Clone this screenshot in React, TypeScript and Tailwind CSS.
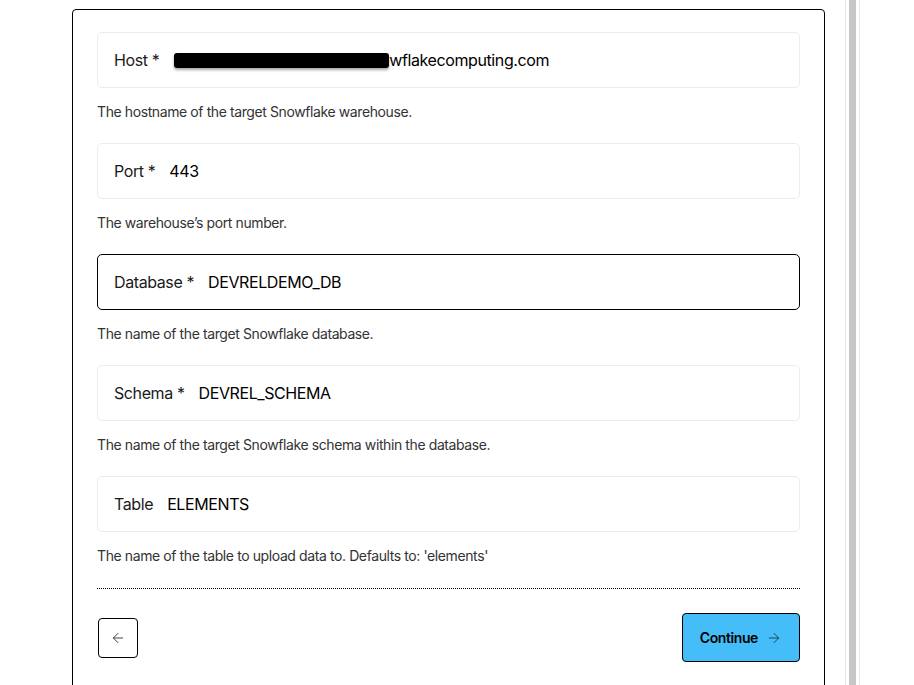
import React from 'react';
import { ArrowLeft, ArrowRight } from 'lucide-react';

type Field = {
  label: string;
  value: string;
  help: string;
  required?: boolean;
  focused?: boolean;
  redacted?: boolean;
};

const fields: Field[] = [
  { label: 'Host', value: 'wflakecomputing.com', help: 'The hostname of the target Snowflake warehouse.', required: true, redacted: true },
  { label: 'Port', value: '443', help: 'The warehouse\u2019s port number.', required: true },
  { label: 'Database', value: 'DEVRELDEMO_DB', help: 'The name of the target Snowflake database.', required: true, focused: true },
  { label: 'Schema', value: 'DEVREL_SCHEMA', help: 'The name of the target Snowflake schema within the database.', required: true },
  { label: 'Table', value: 'ELEMENTS', help: "The name of the table to upload data to. Defaults to: 'elements'" },
];

function FormField({ field }: { field: Field }) {
  return (
    <div className="flex flex-col">
      <div
        className={
          'flex items-center h-[56px] px-4 rounded-[5px] border ' +
          (field.focused ? 'border-black' : 'border-[#ececec]')
        }
      >
        <span className="text-[16px] text-[#1a1a1a] whitespace-nowrap">
          {field.label}
          {field.required && ' *'}
        </span>
        <span className="ml-[14px] flex items-center text-[16px] text-black whitespace-nowrap">
          {field.redacted && (
            <span className="inline-block ml-px w-[215px] h-[15px] bg-black rounded-[3px] shadow-[0_2px_3px_rgba(0,0,0,0.35)]" />
          )}
          {field.value}
        </span>
      </div>
      <p className="mt-[14px] text-[14px] leading-5 text-[#333]">{field.help}</p>
    </div>
  );
}

export default function App() {
  return (
    <div className="min-h-screen bg-white font-['Inter',sans-serif] tracking-tight flex items-start">
      <div className="ml-[72px] mt-[9px] w-[753px] shrink-0 border border-black rounded-t-[4px] px-6 pt-[22px] pb-6">
        <div className="flex flex-col gap-[21px]">
          {fields.map((f) => (
            <FormField key={f.label} field={f} />
          ))}
        </div>

        <div className="mt-[22px] border-t border-dotted border-black" />

        <div className="mt-6 flex items-center justify-between">
          <button className="w-10 h-10 ml-px flex items-center justify-center border border-black rounded-[4px] bg-white">
            <ArrowLeft className="w-4 h-4 text-[#444]" strokeWidth={1.5} />
          </button>
          <button className="h-[49px] flex items-center gap-2 px-[17px] border border-black rounded-[4px] bg-[#44bdf9] text-[14px] font-semibold text-black">
            Continue
            <ArrowRight className="w-4 h-4 text-[#1f4a60]" strokeWidth={1.5} />
          </button>
        </div>
      </div>

      {/* scroll track beside the card */}
      <div className="ml-[20px] h-screen w-[15px] shrink-0 border-x border-[#e8e8e8] px-[3px]">
        <div className="h-full bg-[#c6c6c6]" />
      </div>
    </div>
  );
}
